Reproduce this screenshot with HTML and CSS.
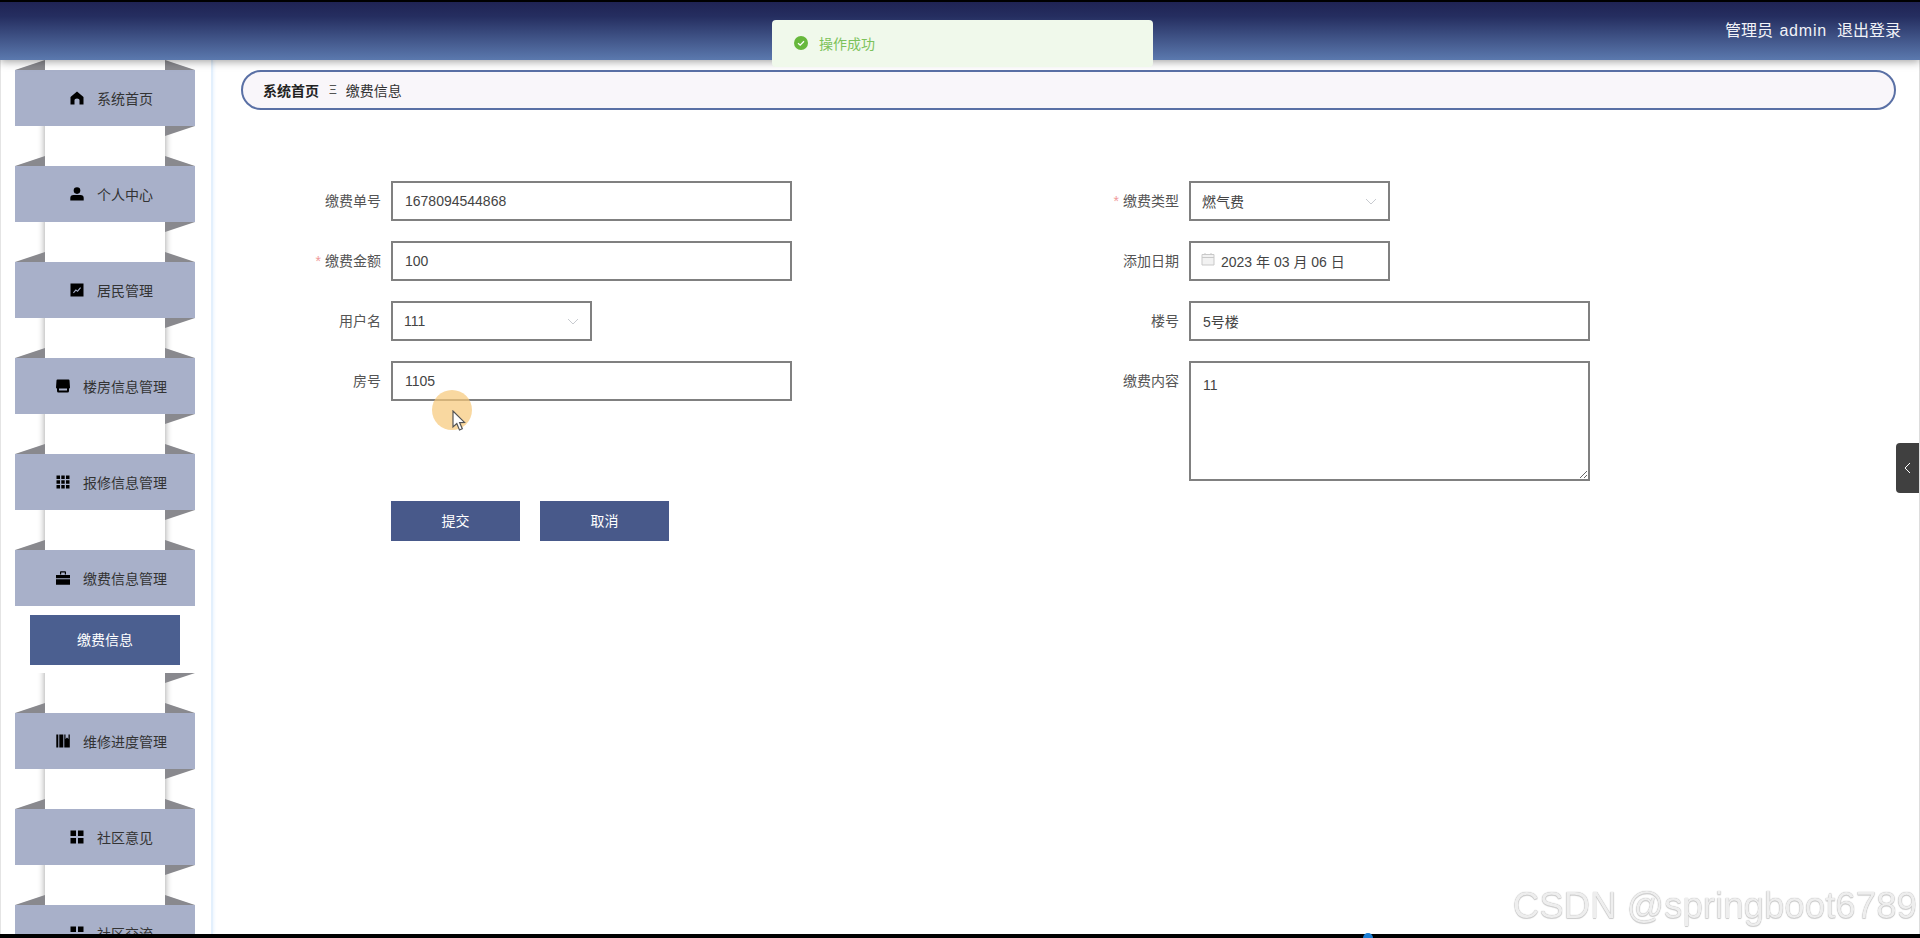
FILE: index.html
```html
<!DOCTYPE html>
<html lang="en">
<head>
    <meta charset="UTF-8">
    <meta name="viewport" content="width=device-width, initial-scale=1.0">
    <title>缴费信息</title>
    <link rel="stylesheet" href="styles.css">
</head>
<body>

    <div class="screen-edge"></div>

    <header class="topbar">
        <span class="topbar-user">管理员 <span class="topbar-name">admin</span></span>
        <span class="topbar-logout">退出登录</span>
    </header>

    <div class="layout">

        <aside class="sidebar">
            <ul class="menu">
                <li class="menu-item">
                    <div class="menu-title">
                        <svg class="menu-icon" viewBox="0 0 14 14"><path d="M7 0.5 L13.5 6 L13.5 13.5 L9.5 13.5 L9.5 9 Q9.5 7.5 7 7.5 Q4.5 7.5 4.5 9 L4.5 13.5 L0.5 13.5 L0.5 6 Z"/></svg>
                        <span>系统首页</span>
                    </div>
                </li>
                <li class="menu-item">
                    <div class="menu-title">
                        <svg class="menu-icon" viewBox="0 0 14 14"><circle cx="7" cy="3.6" r="3.3"/><path d="M0.3 13.6 L0.3 11 Q0.3 8 3.5 8 L10.5 8 Q13.7 8 13.7 11 L13.7 13.6 Z"/></svg>
                        <span>个人中心</span>
                    </div>
                </li>
                <li class="menu-item">
                    <div class="menu-title">
                        <svg class="menu-icon" viewBox="0 0 14 14"><path fill-rule="evenodd" d="M0.5 0.5 H13.5 V13.5 H0.5 Z M3 9.5 L3.8 10.3 L6 7.8 L7.6 9 L11 5 L10.2 4.3 L7.4 7.4 L5.8 6.2 Z"/></svg>
                        <span>居民管理</span>
                    </div>
                </li>
                <li class="menu-item">
                    <div class="menu-title">
                        <svg class="menu-icon" viewBox="0 0 14 14"><path fill-rule="evenodd" d="M1.5 0.5 H12.5 Q13.500 0.500 13.500 1.500 L14 8.500 Q14 9.500 13 9.500 L13 12 Q13 13.500 11.500 13.500 H2.500 Q1 13.500 1 12 L1 9.500 Q0 9.500 0 8.500 L0.500 1.500 Q0.500 0.500 1.500 0.500 Z M3 9.500 V11.500 H11 V9.500 Z"/></svg>
                        <span>楼房信息管理</span>
                    </div>
                </li>
                <li class="menu-item">
                    <div class="menu-title">
                        <svg class="menu-icon" viewBox="0 0 14 14"><path d="M0.500 0.500 H4 V4 H0.500 Z M5.300 0.500 H8.700 V4 H5.300 Z M10 0.500 H13.500 V4 H10 Z M0.500 5.300 H4 V8.700 H0.500 Z M5.300 5.300 H8.700 V8.700 H5.300 Z M10 5.300 H13.500 V8.700 H10 Z M0.500 10 H4 V13.500 H0.500 Z M5.300 10 H8.700 V13.500 H5.300 Z M10 10 H13.500 V13.500 H10 Z"/></svg>
                        <span>报修信息管理</span>
                    </div>
                </li>
                <li class="menu-item">
                    <div class="menu-title">
                        <svg class="menu-icon" viewBox="0 0 14 14"><path d="M4 3.500 V1 Q4 0.300 4.800 0.300 H9.200 Q10 0.300 10 1 V3.500 H8.800 V1.500 H5.200 V3.500 Z M0 4 H14 V7.300 H0 Z M0 8.300 H14 V13.700 H0 Z"/></svg>
                        <span>缴费信息管理</span>
                    </div>
                    <div class="submenu">
                        <div class="submenu-item">缴费信息</div>
                    </div>
                </li>
                <li class="menu-item">
                    <div class="menu-title">
                        <svg class="menu-icon" viewBox="0 0 14 14"><path d="M0.300 0.500 H2.300 V13.500 H0.300 Z M3.300 0.500 H7.300 V13.500 H3.300 Z M8.300 0.500 H9.500 V5 L11 3.600 L12.500 5 V0.500 H13.800 V13.500 H8.300 Z"/></svg>
                        <span>维修进度管理</span>
                    </div>
                </li>
                <li class="menu-item">
                    <div class="menu-title">
                        <svg class="menu-icon" viewBox="0 0 14 14"><path d="M0.500 0.500 H6 V6 H0.500 Z M8 0.500 H13.500 V6 H8 Z M0.500 8 H6 V13.500 H0.500 Z M8 8 H13.500 V13.500 H8 Z"/></svg>
                        <span>社区意见</span>
                    </div>
                </li>
                <li class="menu-item">
                    <div class="menu-title">
                        <svg class="menu-icon" viewBox="0 0 14 14"><path d="M0.500 0.500 H6 V6 H0.500 Z M8 0.500 H13.500 V6 H8 Z M0.500 8 H6 V13.500 H0.500 Z M8 8 H13.500 V13.500 H8 Z"/></svg>
                        <span>社区交流</span>
                    </div>
                </li>
            </ul>
        </aside>

        <main class="content">
            <div class="breadcrumb">
                <span class="crumb-home">系统首页</span>
                <span class="crumb-sep">Ξ</span>
                <span class="crumb-current">缴费信息</span>
            </div>

            <form class="pay-form">
                <div class="form-row">
                    <label class="form-label">缴费单号</label>
                    <input class="form-input" type="text" value="1678094544868">
                </div>
                <div class="form-row">
                    <label class="form-label"><em class="required">*</em>缴费类型</label>
                    <div class="form-select">
                        <span>燃气费</span>
                        <svg class="chevron" viewBox="0 0 12 7"><path d="M1 1 L6 6 L11 1"/></svg>
                    </div>
                </div>
                <div class="form-row">
                    <label class="form-label"><em class="required">*</em>缴费金额</label>
                    <input class="form-input" type="text" value="100">
                </div>
                <div class="form-row">
                    <label class="form-label">添加日期</label>
                    <div class="form-select form-date">
                        <svg class="date-icon" viewBox="0 0 14 14"><path d="M1 2.500 H13 V13 H1 Z M1 5.500 H13 M4 1 V3 M10 1 V3"/></svg>
                        <span>2023 年 03 月 06 日</span>
                    </div>
                </div>
                <div class="form-row">
                    <label class="form-label">用户名</label>
                    <div class="form-select">
                        <span>111</span>
                        <svg class="chevron" viewBox="0 0 12 7"><path d="M1 1 L6 6 L11 1"/></svg>
                    </div>
                </div>
                <div class="form-row">
                    <label class="form-label">楼号</label>
                    <input class="form-input" type="text" value="5号楼">
                </div>
                <div class="form-row">
                    <label class="form-label">房号</label>
                    <input class="form-input" type="text" value="1105">
                </div>
                <div class="form-row">
                    <label class="form-label">缴费内容</label>
                    <textarea class="form-textarea">11</textarea>
                </div>
                <div class="form-buttons">
                    <button class="form-btn" type="button">提交</button>
                    <button class="form-btn" type="button">取消</button>
                </div>
            </form>
        </main>
    </div>

    <div class="screen-bottom"></div>

    <!-- overlays -->
    <div class="toast">
        <svg class="toast-icon" viewBox="0 0 14 14"><circle cx="7" cy="7" r="7"/><path d="M4 7.200 L6.200 9.200 L10 5.200"/></svg>
        <span>操作成功</span>
    </div>

    <div class="side-tab">
        <svg viewBox="0 0 7 12"><path d="M6 1 L1 6 L6 11"/></svg>
    </div>

    <div class="cursor-mark">
        <svg viewBox="0 0 14 22"><path d="M1 1 L1 17 L4.800 13.500 L7.500 20 L10.300 18.800 L7.600 12.600 L12.500 12.400 Z"/></svg>
    </div>

    <div class="watermark">CSDN @springboot6789</div>
    <div class="taskbar-dot"></div>

</body>
</html>
```

FILE: styles.css
```css
* {
    box-sizing: border-box;
}
html, body {
    height: 100%;
}
body {
    margin: 0;
    display: flex;
    flex-direction: column;
    overflow: hidden;
    background-color: #fff;
    font-family: "Liberation Sans", "Noto Sans CJK SC", sans-serif;
    font-size: 14px;
    color: #333;
}

/* black strips from the screen recording */
.screen-edge {
    height: 2px;
    flex: none;
    background-color: #000;
}
.screen-bottom {
    height: 4px;
    flex: none;
    background-color: #000;
    position: relative;
    z-index: 5;
}

/* Top bar */
.topbar {
    height: 58px;
    flex: none;
    display: flex;
    justify-content: flex-end;
    align-items: center;
    gap: 10px;
    padding: 0 19px 4px 0;
    background: linear-gradient(to bottom, #1f2353, #252e60 25%, #5b79ae);
    box-shadow: 0 2px 8px rgba(0, 0, 0, 0.35);
    color: #f2f3f8;
    font-size: 16px;
    position: relative;
    z-index: 3;
}
.topbar-user {
    word-spacing: 2px;
}
.topbar-name {
    letter-spacing: 0.8px;
}

.layout {
    flex: 1;
    display: flex;
    min-height: 0;
}

/* Sidebar */
.sidebar {
    width: 213px;
    flex: none;
    overflow: hidden;
    border-left: 1px solid #e4e4e4;
    border-right: 2px solid #e3f0fd;
    box-shadow: 1px 0 3px #eaf4fe;
    padding: 10px 0 0 14px;
    position: relative;
    z-index: 1;
}
.menu {
    list-style: none;
    margin: 0;
    padding: 0;
    width: 180px;
    position: relative;
}
/* white ribbon running behind the items */
.menu::before {
    content: "";
    position: absolute;
    top: -10px;
    bottom: 0;
    left: 30px;
    width: 120px;
    background-color: #fff;
    box-shadow: 0 0 7px rgba(0, 0, 0, 0.4);
}
.menu-item {
    position: relative;
    margin-bottom: 40px;
}
.menu-item::before,
.menu-item::after {
    content: "";
    position: absolute;
    left: 0;
    width: 180px;
    height: 10px;
    background-color: #89898e;
}
.menu-item::before {
    top: -10px;
    clip-path: polygon(0 100%, 30px 0, 30px 100%, 150px 100%, 150px 0, 100% 100%);
}
.menu-item::after {
    bottom: -10px;
    clip-path: polygon(0 0, 30px 0, 30px 100%, 30px 0, 150px 0, 150px 100%, 100% 0);
}
.menu-title {
    position: relative;
    height: 56px;
    display: flex;
    justify-content: center;
    align-items: center;
    gap: 13px;
    padding-left: 13px;
    background-color: #a8b0c9;
    color: #333;
}
.menu-icon {
    width: 14px;
    height: 14px;
    flex: none;
    fill: #000;
}
.submenu {
    position: relative;
    background-color: #fff;
    padding: 9px 15px 8px;
}
.submenu-item {
    height: 50px;
    line-height: 50px;
    text-align: center;
    background-color: #4b5f90;
    color: #fff;
}

/* Main content */
.content {
    flex: 1;
    min-width: 0;
    padding: 10px 23px 0 28px;
    border-right: 1px solid #ddd;
}
.breadcrumb {
    height: 40px;
    display: flex;
    align-items: center;
    padding-left: 20px;
    border: 2px solid #5a70a5;
    border-radius: 20px;
    background-color: #f9f6fa;
}
.crumb-home {
    font-weight: bold;
    color: #222;
}
.crumb-sep {
    margin: 0 9px 0 10px;
    font-size: 12px;
    color: #555;
}
.crumb-current {
    color: #333;
}

/* Form */
.pay-form {
    margin-top: 71px;
    display: grid;
    grid-template-columns: 798px 1fr;
    row-gap: 20px;
}
.form-row {
    display: flex;
    align-items: flex-start;
}
.form-label {
    width: 150px;
    flex: none;
    padding-right: 10px;
    line-height: 40px;
    text-align: right;
    color: #555;
}
.required {
    margin-right: 4px;
    font-style: normal;
    color: #f09a9a;
}
.form-input,
.form-select,
.form-textarea {
    border: 2px solid #808080;
    background-color: #fff;
    color: #444;
    font-family: inherit;
    font-size: 14px;
}
.form-input {
    width: 401px;
    height: 40px;
    padding: 0 12px;
    outline: none;
}
.form-select {
    width: 201px;
    height: 40px;
    padding: 0 11px;
    display: flex;
    align-items: center;
    justify-content: space-between;
}
.form-date {
    justify-content: flex-start;
    gap: 6px;
    padding-left: 10px;
}
.form-textarea {
    display: block;
    width: 401px;
    height: 120px;
    padding: 14px 12px;
    outline: none;
}
.chevron {
    width: 12px;
    height: 7px;
    fill: none;
    stroke: #c8cbd0;
    stroke-width: 1;
}
.date-icon {
    width: 14px;
    height: 14px;
    margin-top: -4px;
    fill: #f2f2f2;
    stroke: #c9c9c9;
    stroke-width: 1;
}
.form-buttons {
    grid-column: 1 / -1;
    display: flex;
    gap: 20px;
    padding-left: 150px;
}
.form-btn {
    width: 129px;
    height: 40px;
    border: 0;
    padding: 0 0 2px;
    background-color: #48598a;
    color: #fff;
    font-family: inherit;
    font-size: 14px;
}

/* Message popup */
.toast {
    position: fixed;
    top: 20px;
    left: 772px;
    width: 381px;
    height: 47px;
    display: flex;
    align-items: center;
    gap: 11px;
    padding: 0 0 2px 22px;
    border-radius: 4px;
    background-color: #f0f9eb;
    color: #7cc25a;
    z-index: 10;
}
.toast-icon {
    width: 14px;
    height: 14px;
    fill: #67b83c;
    stroke: none;
}
.toast-icon path {
    fill: none;
    stroke: #fff;
    stroke-width: 1.3;
}

/* Collapse tab at the right edge */
.side-tab {
    position: fixed;
    top: 443px;
    right: 1px;
    width: 23px;
    height: 50px;
    display: flex;
    justify-content: center;
    align-items: center;
    border-radius: 4px 0 0 4px;
    background-color: #404040;
    z-index: 10;
}
.side-tab svg {
    width: 7px;
    height: 12px;
    fill: none;
    stroke: #fff;
    stroke-width: 1;
}

/* Recorded mouse pointer with its highlight */
.cursor-mark {
    position: fixed;
    top: 390px;
    left: 432px;
    width: 40px;
    height: 40px;
    border-radius: 50%;
    background-color: rgba(247, 200, 120, 0.7);
    z-index: 10;
}
.cursor-mark svg {
    position: absolute;
    top: 20px;
    left: 20px;
    width: 14px;
    height: 22px;
    fill: #fff;
    stroke: #555;
    stroke-width: 1.2;
}

/* CSDN watermark */
.watermark {
    position: fixed;
    right: 3px;
    bottom: 11px;
    font-size: 36.7px;
    line-height: 42px;
    color: #eeeeee;
    text-shadow: 0 0 1px #9a9a9a, 0 1px 1px #d0d0d0;
    z-index: 10;
}

.taskbar-dot {
    position: fixed;
    left: 1363px;
    top: 933px;
    width: 10px;
    height: 10px;
    border-radius: 50%;
    background-color: #1c7fd6;
    z-index: 11;
}
```
